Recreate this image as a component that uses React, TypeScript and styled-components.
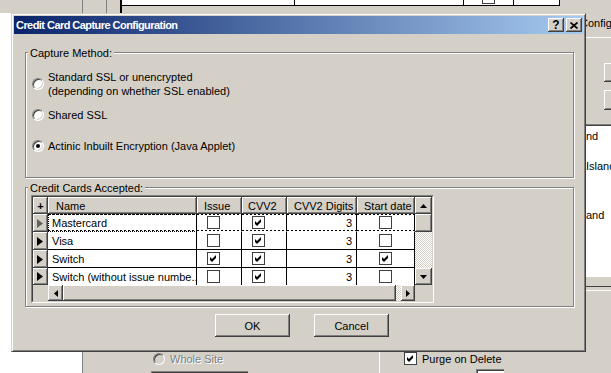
import React from 'react';
import styled, { createGlobalStyle, css } from 'styled-components';

const GlobalStyle = createGlobalStyle`
  * { box-sizing: border-box; }
  html, body { margin: 0; padding: 0; }
  body {
    background: #d4d0c8;
    font-family: "Liberation Sans", Arial, sans-serif;
    font-size: 11px;
    color: #000;
    overflow: hidden;
  }
`;

const raised = css`
  background: #d4d0c8;
  box-shadow: inset -1px -1px 0 #404040, inset 1px 1px 0 #fff, inset -2px -2px 0 #808080;
`;

const dither = css`
  background-color: #fff;
  background-image: conic-gradient(#d4d0c8 25%, #fff 0 50%, #d4d0c8 0 75%, #fff 0);
  background-size: 2px 2px;
`;

const Desktop = styled.div`
  position: relative;
  width: 611px;
  height: 373px;
  overflow: hidden;
  background: #d4d0c8;
`;

/* ---------- the application window behind the dialog ---------- */

const TreePane = styled.div`
  position: absolute;
  left: 0;
  top: 13px;
  bottom: 0;
  width: 82px;
  background: #fff;
`;

const Splitter = styled.div`
  position: absolute;
  left: 82px;
  top: 0;
  bottom: 0;
  width: 1px;
  background: #808080;
`;

const BackGrid = styled.div`
  position: absolute;
  left: 106px;
  top: 0;
  display: flex;
  align-items: flex-start;
`;

const BackStub = styled.div`
  width: 16px;
  height: 13px;
  border-left: 1px solid #808080;
  border-right: 2px solid #000;
`;

const BackCell = styled.div<{ $w: number }>`
  width: ${p => p.$w}px;
  height: 6px;
  background: #fff;
  border-right: 1px solid #000;
  border-bottom: 1px solid #000;
  display: flex;
  justify-content: center;
  align-items: flex-end;
  overflow: hidden;
`;

const BackCheck = styled.span`
  width: 13px;
  height: 13px;
  flex: none;
  border: 1px solid #404040;
  margin-bottom: 1px;
`;

const RightPane = styled.div`
  position: absolute;
  left: 579px;
  top: 0;
  width: 32px;
  height: 373px;
  display: flex;
  flex-direction: column;
`;

const TabLabel = styled.div`
  margin-top: 17px;
  height: 13px;
  line-height: 13px;
  padding-left: 1px;
  white-space: nowrap;
`;

const TabEdge = styled.div`
  margin-top: 7px;
  height: 1px;
  background: #fff;
`;

const SideButton = styled.div<{ $top: number; $h: number }>`
  ${raised};
  margin: ${p => p.$top}px 0 0 25px;
  height: ${p => p.$h}px;
  width: 20px;
`;

const SideList = styled.div`
  margin-top: 14px;
  height: 153px;
  background: #fff;
  border-top: 1px solid #808080;
  box-shadow: inset 0 1px 0 #404040;
  padding: 5px 0 0 7px;
  white-space: nowrap;
`;

const SideItem = styled.div<{ $gap: number }>`
  margin-top: ${p => p.$gap}px;
  line-height: 13px;
`;

const SideRule = styled.div<{ $gap: number; $color: string }>`
  margin-top: ${p => p.$gap}px;
  height: 1px;
  background: ${p => p.$color};
`;

const BottomForm = styled.div`
  position: absolute;
  left: 83px;
  top: 340px;
  right: 0;
  bottom: 0;
  display: grid;
  grid-template-columns: 296px 1fr;
`;

const FormCol = styled.div<{ $pl: number; $line?: boolean }>`
  padding: 12px 0 0 ${p => p.$pl}px;
  border-left: ${p => (p.$line ? '1px solid #fff' : 'none')};
`;

const FormRow = styled.div`
  display: flex;
  align-items: center;
  gap: 5px;
  height: 13px;
  white-space: nowrap;
`;

const DisabledText = styled.span`
  color: #808080;
  text-shadow: 1px 1px 0 #fff;
`;

const FormField = styled.div<{ $ml: number; $mt: number; $w: number }>`
  margin: ${p => p.$mt}px 0 0 ${p => p.$ml}px;
  width: ${p => p.$w}px;
  height: 14px;
  background: #fff;
  border-top: 1px solid #808080;
  border-left: 1px solid #808080;
  box-shadow: inset 1px 1px 0 #404040;
  text-align: right;
  padding: 2px 5px 0 0;
  line-height: 11px;
`;

/* ---------- dialog ---------- */

const Dialog = styled.div`
  position: absolute;
  left: 11px;
  top: 13px;
  width: 575px;
  height: 339px;
  z-index: 2;
  background: #d4d0c8;
  border: 1px solid;
  border-color: #d4d0c8 #404040 #404040 #d4d0c8;
  box-shadow: inset 1px 1px 0 #fff, inset -1px -1px 0 #808080;
  padding: 2px;
  display: flex;
  flex-direction: column;
`;

const TitleBar = styled.div`
  height: 18px;
  flex: none;
  display: flex;
  align-items: center;
  gap: 2px;
  padding: 0 1px 0 2px;
  background: linear-gradient(to right, #0a246a, #a6caf0);
`;

const TitleText = styled.div`
  flex: 1;
  color: #fff;
  font-weight: bold;
  font-size: 11px;
  letter-spacing: -0.55px;
`;

const TitleButton = styled.div`
  ${raised};
  width: 16px;
  height: 14px;
  display: flex;
  align-items: center;
  justify-content: center;
  font-weight: bold;
  font-size: 12px;
  line-height: 12px;
`;

const Client = styled.div`
  flex: 1;
  display: flex;
  flex-direction: column;
  padding: 12px 9px 0 11px;
`;

const GroupBox = styled.fieldset<{ $pb: number; $mt: number }>`
  margin: ${p => p.$mt}px 0 0 0;
  padding: 0 0 ${p => p.$pb}px 0;
  min-width: 0;
  border: 1px solid #808080;
  box-shadow: inset 1px 1px 0 #fff, 1px 1px 0 #fff;
`;

const GroupLabel = styled.legend`
  margin-left: 2px;
  padding: 2px 2px 0;
  height: 13px;
  line-height: 11px;
  background: #d4d0c8;
`;

const RadioRow = styled.label<{ $gap: number }>`
  display: flex;
  align-items: center;
  gap: 4px;
  margin: ${p => p.$gap}px 0 0 6px;
  line-height: 14px;
`;

const Radio = styled.span<{ $on?: boolean; $off?: boolean }>`
  position: relative;
  flex: none;
  width: 12px;
  height: 12px;
  border-radius: 50%;
  border: 1px solid;
  border-color: #808080 #fff #fff #808080;
  background: ${p => (p.$off ? '#d4d0c8' : '#fff')};
  box-shadow: inset 1px 1px 0 #404040, inset -1px -1px 0 #d4d0c8;
  &::after {
    content: '';
    display: ${p => (p.$on ? 'block' : 'none')};
    position: absolute;
    left: 3px;
    top: 3px;
    width: 4px;
    height: 4px;
    border-radius: 50%;
    background: #000;
  }
`;

const GridWrap = styled.div`
  margin: 1px 0 0 5px;
  width: 403px;
  border: 1px solid;
  border-color: #808080 #fff #fff #808080;
`;

const DataGrid = styled.div`
  display: grid;
  grid-template-columns: 15px 149px 45px 45px 70px 58px 17px;
  grid-template-rows: 17px 18px 18px 18px 17px 16px;
  border: 1px solid;
  border-color: #404040 #d4d0c8 #d4d0c8 #404040;
  background: #d4d0c8;
`;

const HeaderCell = styled.div<{ $center?: boolean; $pl?: number }>`
  ${raised};
  display: flex;
  align-items: center;
  justify-content: ${p => (p.$center ? 'center' : 'flex-start')};
  padding-left: ${p => p.$pl ?? 0}px;
  white-space: nowrap;
  overflow: hidden;
`;

const RowHead = styled.div<{ $row: number }>`
  ${raised};
  grid-column: 1;
  grid-row: ${p => p.$row};
  display: flex;
  align-items: center;
  justify-content: center;
  padding-right: 1px;
`;

const dashes = (pos: string) =>
  `repeating-linear-gradient(90deg, #000 0 2px, transparent 2px 4px) ${pos} / 100% 1px no-repeat`;

const Cell = styled.div<{
  $row: number;
  $col: number;
  $align: string;
  $focusRow?: boolean;
  $focus?: boolean;
  $last?: boolean;
  $pl?: number;
  $pr?: number;
}>`
  grid-row: ${p => p.$row};
  grid-column: ${p => p.$col};
  display: flex;
  align-items: center;
  justify-content: ${p => p.$align};
  padding: 0 ${p => p.$pr ?? 0}px 0 ${p => p.$pl ?? 0}px;
  white-space: nowrap;
  overflow: hidden;
  border-right: 1px solid #000;
  border-bottom: ${p => (p.$last ? 'none' : p.$focusRow ? '1px solid transparent' : '1px solid #000')};
  background: ${p => (p.$focusRow ? `${dashes('top')}, ${dashes('bottom')}, #fff` : '#fff')};
  outline: ${p => (p.$focus ? '1px dotted #000' : 'none')};
  outline-offset: -1px;
`;

const Check = styled.span`
  width: 13px;
  height: 13px;
  flex: none;
  border: 1px solid #404040;
  background: #fff;
  display: flex;
  align-items: center;
  justify-content: center;
`;

const ScrollButton = styled.div<{ $col?: string; $row?: string }>`
  ${raised};
  grid-column: ${p => p.$col ?? 'auto'};
  grid-row: ${p => p.$row ?? 'auto'};
  display: flex;
  align-items: center;
  justify-content: center;
`;

const ScrollTrack = styled.div<{ $col?: string; $row?: string }>`
  ${dither};
  grid-column: ${p => p.$col ?? 'auto'};
  grid-row: ${p => p.$row ?? 'auto'};
`;

const HScroll = styled.div`
  grid-column: 2 / 7;
  grid-row: 6;
  display: flex;
`;

const HPiece = styled.div<{ $w?: number; $track?: boolean; $grow?: boolean }>`
  ${p => (p.$track ? dither : raised)};
  width: ${p => (p.$w ? `${p.$w}px` : 'auto')};
  flex: ${p => (p.$grow ? 1 : 'none')};
  display: flex;
  align-items: center;
  justify-content: center;
`;

const ButtonRow = styled.div`
  display: flex;
  justify-content: center;
  gap: 24px;
  margin-top: 7px;
  padding-left: 5px;
`;

const PushButton = styled.button`
  ${raised};
  width: 75px;
  height: 23px;
  border: none;
  font-family: inherit;
  font-size: 11px;
  color: #000;
  padding: 0;
`;

/* ---------- drawings ---------- */

const Tick = () => (
  <svg width="9" height="9" viewBox="0 0 9 9">
    <polygon points="1,3 3,5 7,1 7,4 3,8 1,6" fill="#000" />
  </svg>
);

const RowArrow = ({ color }: { color: string }) => (
  <svg width="6" height="9" viewBox="0 0 6 9">
    <polygon points="0,0 6,4.5 0,9" fill={color} />
  </svg>
);

const Arrow = ({ dir }: { dir: 'up' | 'down' | 'left' | 'right' }) => {
  const pts = {
    up: '0,4 3.5,0 7,4',
    down: '0,0 7,0 3.5,4',
    left: '4,0 4,7 0,3.5',
    right: '0,0 4,3.5 0,7',
  }[dir];
  const horiz = dir === 'left' || dir === 'right';
  return (
    <svg width={horiz ? 4 : 7} height={horiz ? 7 : 4} viewBox={horiz ? '0 0 4 7' : '0 0 7 4'}>
      <polygon points={pts} fill="#000" />
    </svg>
  );
};

const CloseGlyph = () => (
  <svg width="8" height="7" viewBox="0 0 8 7">
    <path d="M0.5 0.5 L7.5 6.5 M7.5 0.5 L0.5 6.5" stroke="#000" strokeWidth="1.7" />
  </svg>
);

const CheckBox = ({ on }: { on: boolean }) => <Check>{on && <Tick />}</Check>;

const cards = [
  { name: 'Mastercard', issue: false, cvv2: true, digits: 3, start: false },
  { name: 'Visa', issue: false, cvv2: true, digits: 3, start: false },
  { name: 'Switch', issue: true, cvv2: true, digits: 3, start: true },
  { name: 'Switch (without issue numbe...', issue: false, cvv2: true, digits: 3, start: false },
];

const headers = [
  { label: 'Name', pl: 8 },
  { label: 'Issue', pl: 7 },
  { label: 'CVV2', pl: 6 },
  { label: 'CVV2 Digits', pl: 7 },
  { label: 'Start date', pl: 7 },
];

const App: React.FC = () => {
  return (
    <Desktop>
      <GlobalStyle />

      <TreePane />
      <Splitter />
      <BackGrid>
        <BackStub />
        <BackCell $w={173} />
        <BackCell $w={169} />
        <BackCell $w={50}>
          <BackCheck />
        </BackCell>
        <BackCell $w={46} />
      </BackGrid>

      <RightPane>
        <TabLabel>Configure</TabLabel>
        <TabEdge />
        <SideButton $top={25} $h={19} />
        <SideButton $top={8} $h={20} />
        <SideList>
          <SideItem $gap={0}>nd</SideItem>
          <SideItem $gap={17}>Island</SideItem>
          <SideItem $gap={36}>and</SideItem>
        </SideList>
        <SideRule $gap={9} $color="#404040" />
        <SideRule $gap={3} $color="#fff" />
      </RightPane>

      <BottomForm>
        <FormCol $pl={70}>
          <FormRow>
            <Radio $off />
            <DisabledText>Whole Site</DisabledText>
          </FormRow>
          <FormField $ml={-2} $mt={6} $w={97} />
        </FormCol>
        <FormCol $pl={24} $line>
          <FormRow>
            <CheckBox on />
            <span>Purge on Delete</span>
          </FormRow>
          <FormField $ml={72} $mt={4} $w={28}>25</FormField>
        </FormCol>
      </BottomForm>

      <Dialog>
        <TitleBar>
          <TitleText>Credit Card Capture Configuration</TitleText>
          <TitleButton>?</TitleButton>
          <TitleButton>
            <CloseGlyph />
          </TitleButton>
        </TitleBar>

        <Client>
          <GroupBox $mt={0} $pb={24}>
            <GroupLabel>Capture Method:</GroupLabel>
            <RadioRow $gap={11}>
              <Radio />
              <span>
                Standard SSL or unencrypted
                <br />
                (depending on whether SSL enabled)
              </span>
            </RadioRow>
            <RadioRow $gap={10}>
              <Radio />
              <span>Shared SSL</span>
            </RadioRow>
            <RadioRow $gap={17}>
              <Radio $on />
              <span>Actinic Inbuilt Encryption (Java Applet)</span>
            </RadioRow>
          </GroupBox>

          <GroupBox $mt={3} $pb={3}>
            <GroupLabel>Credit Cards Accepted:</GroupLabel>
            <GridWrap>
              <DataGrid>
                <HeaderCell $center>
                  <b>+</b>
                </HeaderCell>
                {headers.map(h => (
                  <HeaderCell key={h.label} $pl={h.pl}>
                    {h.label}
                  </HeaderCell>
                ))}
                <ScrollButton $col="7" $row="1">
                  <Arrow dir="up" />
                </ScrollButton>

                {cards.map((c, i) => {
                  const focusRow = i === 0;
                  const last = i === cards.length - 1;
                  const row = i + 2;
                  const common = { $row: row, $focusRow: focusRow, $last: last };
                  return (
                    <React.Fragment key={c.name}>
                      <RowHead $row={row}>
                        <RowArrow color={focusRow ? '#606060' : '#000'} />
                      </RowHead>
                      <Cell {...common} $col={2} $align="flex-start" $pl={4} $focus={focusRow}>
                        {c.name}
                      </Cell>
                      <Cell {...common} $col={3} $align="center" $pr={12}>
                        <CheckBox on={c.issue} />
                      </Cell>
                      <Cell {...common} $col={4} $align="center" $pr={12}>
                        <CheckBox on={c.cvv2} />
                      </Cell>
                      <Cell {...common} $col={5} $align="flex-end" $pr={4}>
                        {c.digits}
                      </Cell>
                      <Cell {...common} $col={6} $align="center">
                        <CheckBox on={c.start} />
                      </Cell>
                    </React.Fragment>
                  );
                })}

                <ScrollButton $col="7" $row="2" />
                <ScrollTrack $col="7" $row="3 / 5" />
                <ScrollButton $col="7" $row="5">
                  <Arrow dir="down" />
                </ScrollButton>

                <HScroll>
                  <HPiece $w={15}>
                    <Arrow dir="left" />
                  </HPiece>
                  <HPiece $grow />
                  <HPiece $w={5} $track />
                  <HPiece $w={14}>
                    <Arrow dir="right" />
                  </HPiece>
                </HScroll>
              </DataGrid>
            </GridWrap>
          </GroupBox>

          <ButtonRow>
            <PushButton>OK</PushButton>
            <PushButton>Cancel</PushButton>
          </ButtonRow>
        </Client>
      </Dialog>
    </Desktop>
  );
};

export default App;
